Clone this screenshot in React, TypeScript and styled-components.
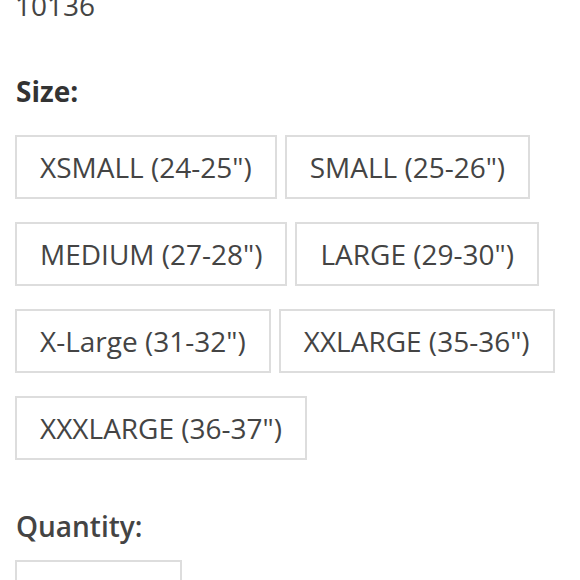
import styled, { createGlobalStyle } from 'styled-components';

const GlobalStyle = createGlobalStyle`
  html, body {
    margin: 0;
    padding: 0;
    background: #fff;
    overflow: hidden;
  }
  body {
    font-family: "Open Sans", "Liberation Sans", sans-serif;
    color: #444;
  }
`;

const sizes = [
  'XSMALL (24-25")',
  'SMALL (25-26")',
  'MEDIUM (27-28")',
  'LARGE (29-30")',
  'X-Large (31-32")',
  'XXLARGE (35-36")',
  'XXXLARGE (36-37")',
];

function App() {
  return (
    <>
      <GlobalStyle />
      <Page>
        <Sku>10136</Sku>
        <Label>Size:</Label>
        <SizeList>
          {sizes.map((s) => (
            <SizeButton key={s}>{s}</SizeButton>
          ))}
        </SizeList>
        <Label $medium>Quantity:</Label>
        <QtyInput />
      </Page>
    </>
  );
}
export default App;

const Page = styled.div`
  padding: 0 15px;
  width: 560px;
`;

const Sku = styled.div`
  margin-top: -9px;
  font-size: 28px;
  line-height: 28px;
  color: #444;
`;

const Label = styled.div<{ $medium?: boolean }>`
  margin-top: ${(p) => (p.$medium ? '48px' : '54px')};
  padding-left: 1px;
  font-size: 28px;
  line-height: 36px;
  font-weight: ${(p) => (p.$medium ? 600 : 700)};
  color: ${(p) => (p.$medium ? '#444' : '#333')};
`;

const SizeList = styled.div`
  display: flex;
  flex-wrap: wrap;
  column-gap: 8px;
  row-gap: 23px;
  margin-top: 26px;
  width: 545px;
`;

const SizeButton = styled.div`
  box-sizing: border-box;
  height: 64px;
  padding: 0 23px;
  border: 2px solid #ddd;
  font-size: 28px;
  line-height: 60px;
  color: #444;
  white-space: nowrap;
`;

const QtyInput = styled.div`
  box-sizing: border-box;
  margin-top: 16px;
  width: 167px;
  height: 64px;
  border: 2px solid #ddd;
`;
